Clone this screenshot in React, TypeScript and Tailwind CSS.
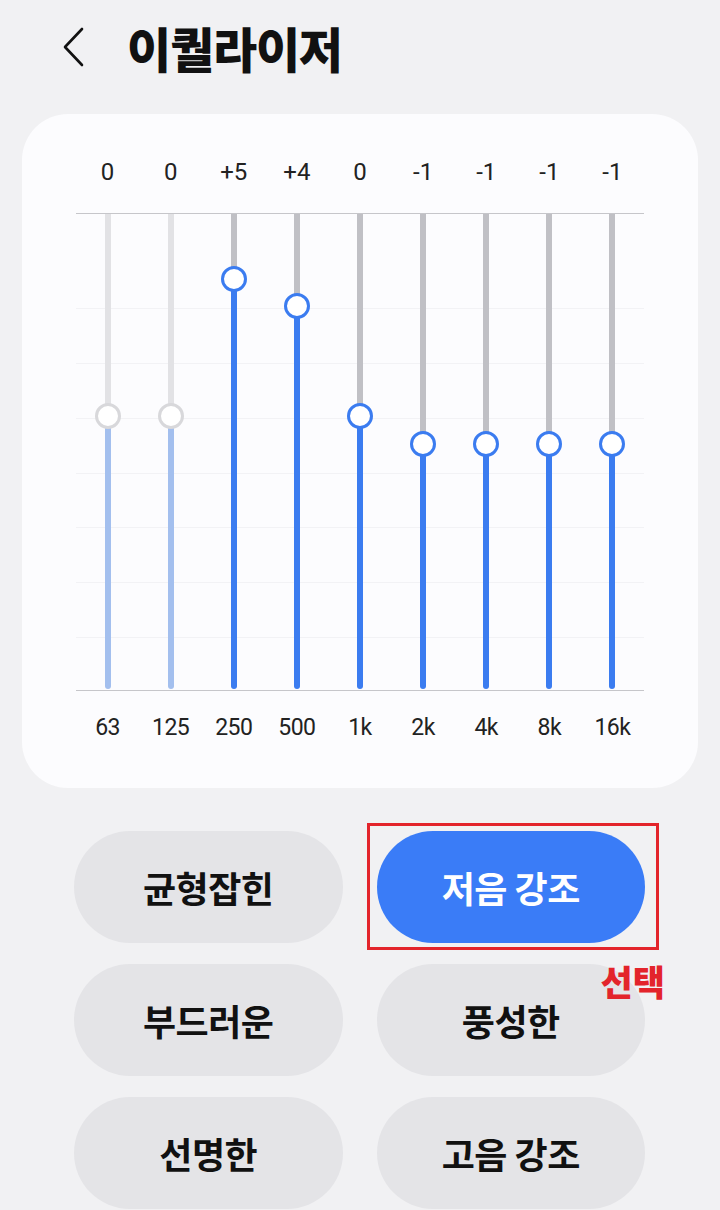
const BANDS = [
  { label: "63", value: 0, dim: true },
  { label: "125", value: 0, dim: true },
  { label: "250", value: 5, dim: false },
  { label: "500", value: 4, dim: false },
  { label: "1k", value: 0, dim: false },
  { label: "2k", value: -1, dim: false },
  { label: "4k", value: -1, dim: false },
  { label: "8k", value: -1, dim: false },
  { label: "16k", value: -1, dim: false },
];

const PRESETS = ["균형잡힌", "저음 강조", "부드러운", "풍성한", "선명한", "고음 강조"];

const GRID_LINES = [94, 149, 204, 259, 313, 368, 423];

// 0 sits at 202px below the top line, each step is ~27.5px
const zeroY = 202;
const step = 27.5;

function fmt(v: number) {
  if (v > 0) return `+${v}`;
  return `${v}`;
}

function Band({ value, dim }: { value: number; dim: boolean }) {
  const y = zeroY - value * step;
  return (
    <div className="relative flex h-full flex-1 justify-center">
      <div className="flex h-[475px] w-[6px] flex-col overflow-hidden rounded-b-full">
        <div
          className={dim ? "bg-[#e2e2e5]" : "bg-[#c0c0c5]"}
          style={{ height: y }}
        />
        <div className={dim ? "flex-1 bg-[#a3bfee]" : "flex-1 bg-[#3b7cf0]"} />
      </div>
      <div
        className={
          "absolute left-1/2 h-[26px] w-[26px] -translate-x-1/2 rounded-full border-[3.5px] bg-white " +
          (dim ? "border-[#d8d8db]" : "border-[#3b7cf0]")
        }
        style={{ top: y - 13 }}
      />
    </div>
  );
}

export default function App() {
  return (
    <div
      className="min-h-[1210px] w-[720px] overflow-hidden bg-[#f1f1f3] text-[#111]"
      style={{ fontFamily: "'Noto Sans CJK KR', 'Noto Sans', sans-serif" }}
    >
      {/* Header */}
      <div className="flex h-[94px] items-center pl-[60px]">
        <svg width="28" height="44" viewBox="0 0 28 44" fill="none">
          <path
            d="M22 4L5 22L22 40"
            stroke="#111"
            strokeWidth="2.6"
            strokeLinecap="round"
            strokeLinejoin="round"
          />
        </svg>
        <h1 className="ml-[39px] text-[48px] font-extrabold leading-none tracking-[-1.2px]">
          이퀄라이저
        </h1>
      </div>

      {/* EQ card */}
      <div className="mx-[22px] mt-[20px] rounded-[46px] bg-[#fcfcfe] px-[54px] pb-[45px] pt-[43px]">
        <div
          className="flex h-[30px] text-[24px] leading-[30px] text-[#222]"
          style={{ fontFamily: "Roboto, 'Noto Sans', sans-serif" }}
        >
          {BANDS.map((b) => (
            <div key={b.label} className="flex-1 text-center">
              {fmt(b.value)}
            </div>
          ))}
        </div>

        <div className="relative mt-[26px] h-[478px] border-y border-[#c6c6ca]">
          {GRID_LINES.map((t) => (
            <div
              key={t}
              className="absolute inset-x-0 h-px bg-[#f2f2f5]"
              style={{ top: t }}
            />
          ))}
          <div className="relative flex h-full">
            {BANDS.map((b) => (
              <Band key={b.label} value={b.value} dim={b.dim} />
            ))}
          </div>
        </div>

        <div
          className="mt-[22px] flex h-[30px] text-[23px] leading-[30px] text-[#222]"
          style={{ fontFamily: "Roboto, 'Noto Sans', sans-serif" }}
        >
          {BANDS.map((b) => (
            <div key={b.label} className="flex-1 text-center tracking-[-0.5px]">
              {b.label}
            </div>
          ))}
        </div>
      </div>

      {/* Presets */}
      <div className="mt-[43px] grid grid-cols-2 gap-x-[34px] gap-y-[21px] pl-[74px] pr-[75px]">
        {PRESETS.map((p) => {
          const selected = p === "저음 강조";
          return (
            <div key={p} className={selected ? "relative z-10" : "relative"}>
              <div
                className={
                  "flex h-[112px] items-center justify-center rounded-full text-[36px] font-bold tracking-[-0.5px] " +
                  (selected ? "bg-[#3a7cf7] text-white" : "bg-[#e4e4e7] text-[#111]")
                }
              >
                {p}
              </div>
              {selected && (
                <>
                  <div className="absolute left-[-10px] top-[-8px] h-[127px] w-[292px] border-[3.5px] border-[#e3242b]" />
                  <div className="absolute left-[224px] top-[132px] whitespace-nowrap text-[35px] font-extrabold leading-none text-[#e3242b]">
                    선택
                  </div>
                </>
              )}
            </div>
          );
        })}
      </div>
    </div>
  );
}
